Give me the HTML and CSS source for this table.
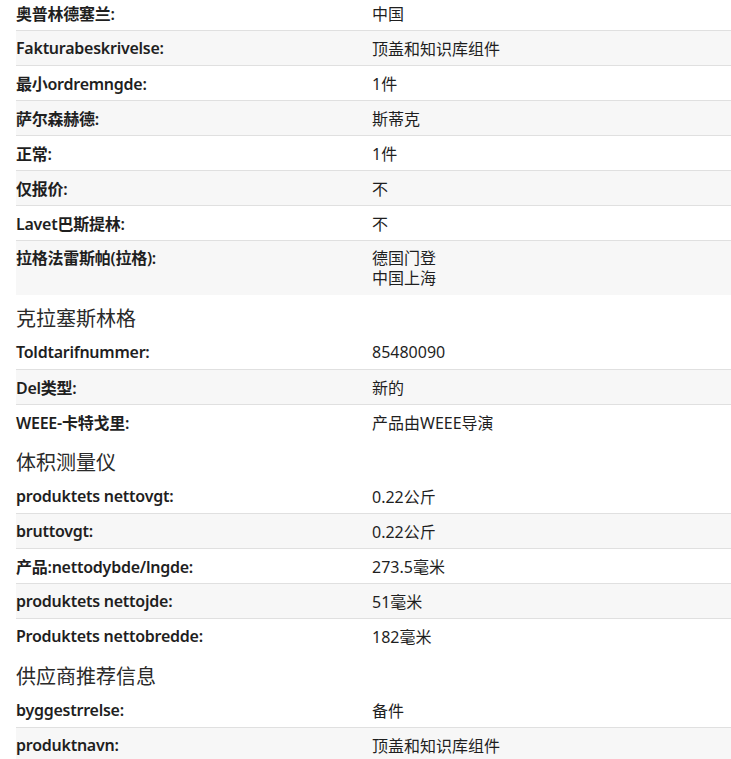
FILE: index.html
```html
<!DOCTYPE html>
<html lang="zh">
<head>
<meta charset="utf-8">
<link rel="stylesheet" href="styles.css">
</head>
<body>
<div class="page">
  <div class="table first">
    <div class="row"><div class="label">奥普林德塞兰:</div><div class="value">中国</div></div>
    <div class="row alt"><div class="label">Fakturabeskrivelse:</div><div class="value">顶盖和知识库组件</div></div>
    <div class="row"><div class="label">最小ordremngde:</div><div class="value">1件</div></div>
    <div class="row alt"><div class="label">萨尔森赫德:</div><div class="value">斯蒂克</div></div>
    <div class="row"><div class="label">正常:</div><div class="value">1件</div></div>
    <div class="row alt"><div class="label">仅报价:</div><div class="value">不</div></div>
    <div class="row"><div class="label">Lavet巴斯提林:</div><div class="value">不</div></div>
    <div class="row alt tall"><div class="label">拉格法雷斯帕(拉格):</div><div class="value">德国门登<br>中国上海</div></div>
  </div>
  <h2 class="heading">克拉塞斯林格</h2>
  <div class="table">
    <div class="row"><div class="label">Toldtarifnummer:</div><div class="value">85480090</div></div>
    <div class="row alt"><div class="label">Del类型:</div><div class="value">新的</div></div>
    <div class="row"><div class="label">WEEE-卡特戈里:</div><div class="value">产品由WEEE导演</div></div>
  </div>
  <h2 class="heading">体积测量仪</h2>
  <div class="table">
    <div class="row"><div class="label">produktets nettovgt:</div><div class="value">0.22公斤</div></div>
    <div class="row alt"><div class="label">bruttovgt:</div><div class="value">0.22公斤</div></div>
    <div class="row"><div class="label">产品:nettodybde/lngde:</div><div class="value">273.5毫米</div></div>
    <div class="row alt"><div class="label">produktets nettojde:</div><div class="value">51毫米</div></div>
    <div class="row"><div class="label">Produktets nettobredde:</div><div class="value">182毫米</div></div>
  </div>
  <h2 class="heading">供应商推荐信息</h2>
  <div class="table">
    <div class="row"><div class="label">byggestrrelse:</div><div class="value">备件</div></div>
    <div class="row alt"><div class="label">produktnavn:</div><div class="value">顶盖和知识库组件</div></div>
  </div>
</div>
</body>
</html>
```
FILE: styles.css
```css
html, body {
  margin: 0;
  padding: 0;
  background: #fff;
}
body {
  font-family: "Noto Sans", "Noto Sans CJK SC", sans-serif;
  color: #1f1f1f;
  font-size: 16px;
}
.page {
  padding: 0 0 0 16px;
  margin-top: -4px;
}
.table {
  display: flex;
  flex-direction: column;
}
.row {
  display: grid;
  grid-template-columns: 356px 1fr;
  height: 34px;
  align-items: center;
  border-bottom: 1px solid #e0e0e0;
}
.row:last-child {
  border-bottom: none;
}
.row.alt {
  background: #f7f7f7;
}
.row.tall {
  height: 54px;
  align-items: start;
}
.row.tall .label, .row.tall .value {
  padding-top: 7px;
  line-height: 20px;
}
.label {
  font-weight: 600;
  letter-spacing: -0.25px;
  white-space: nowrap;
}
.value {
  font-weight: 400;
}
.heading {
  margin: 0;
  height: 40px;
  display: flex;
  align-items: center;
  font-size: 20px;
  font-weight: 400;
  color: #2a2a2a;
  padding-top: 4px;
  box-sizing: border-box;
}
```
